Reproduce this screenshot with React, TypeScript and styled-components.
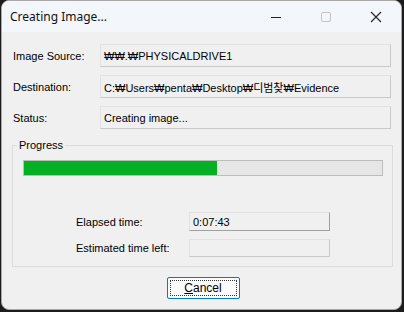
import React from "react";
import styled, { createGlobalStyle } from "styled-components";

const Global = createGlobalStyle`
  html, body { margin: 0; padding: 0; background: #1c1c1c; }
  body { width: 404px; height: 312px; overflow: hidden; }
`;

const Window = styled.div`
  box-sizing: border-box;
  margin-left: 1px;
  width: 401px;
  height: 310px;
  border: 1px solid #a8a8a8;
  border-radius: 8px;
  overflow: hidden;
  background: #f0f0f0;
  display: flex;
  flex-direction: column;
  font-family: "Liberation Sans", "Noto Sans CJK KR", sans-serif;
  font-size: 11px;
  color: #000;
`;

const TitleBar = styled.div`
  height: 31px;
  background: #f3f6fb;
  display: flex;
  align-items: center;
  padding-left: 8px;
`;

const TitleText = styled.div`
  flex: 1;
  font-family: "Noto Sans", "Open Sans", sans-serif;
  font-size: 12px;
  color: #111;
  padding-bottom: 1px;
`;

const CaptionButton = styled.div`
  width: 50px;
  height: 31px;
  display: flex;
  align-items: center;
  justify-content: center;
`;

const Body = styled.div`
  flex: 1;
  display: flex;
  flex-direction: column;
  padding: 12px 10px 0 10px;
`;

const Row = styled.div`
  display: flex;
  align-items: center;
  height: 23px;
  margin-bottom: 8px;
`;

const Label = styled.div<{ $w: number }>`
  width: ${(p) => p.$w}px;
  padding-left: 1px;
  flex-shrink: 0;
`;

const Field = styled.div<{ $w?: number; $h?: number; $strong?: boolean }>`
  box-sizing: border-box;
  width: ${(p) => (p.$w ? `${p.$w}px` : "auto")};
  flex: ${(p) => (p.$w ? "none" : 1)};
  height: ${(p) => p.$h ?? 23}px;
  border: 1px solid #e2e2e2;
  border-right-color: ${(p) => (p.$strong ? "#a0a0a0" : "#c9c9c9")};
  border-bottom-color: ${(p) => (p.$strong ? "#a0a0a0" : "#c9c9c9")};
  background: #f0f0f0;
  display: flex;
  align-items: center;
  padding-left: 3px;
  white-space: nowrap;
`;

const Group = styled.fieldset`
  margin: 2px 0 0 0;
  padding: 9px 9px 0 10px;
  height: 128px;
  box-sizing: border-box;
  border: 1px solid #dcdcdc;
  border-radius: 0;
  min-width: 0;
  width: 381px;
`;

const Legend = styled.legend`
  padding: 0 2px;
  margin-left: -6px;
  font-size: 11px;
`;

const ProgressTrack = styled.div`
  box-sizing: border-box;
  height: 16px;
  width: 360px;
  border: 1px solid #bcbcbc;
  background: #e6e6e6;
  display: flex;
`;

const ProgressFill = styled.div`
  background: #06b025;
  height: 100%;
`;

const TimeGrid = styled.div`
  display: grid;
  grid-template-columns: 113px 141px;
  row-gap: 8px;
  margin-top: 36px;
  margin-left: 53px;
  align-items: center;
`;

const TimeLabel = styled.div``;

const Footer = styled.div`
  display: flex;
  justify-content: center;
  padding-top: 10px;
  padding-left: 3px;
`;

const Button = styled.button`
  box-sizing: border-box;
  width: 73px;
  height: 22px;
  background: #fbfbfb;
  border: 1px solid #0078d7;
  border-radius: 2px;
  padding: 2px;
  font-family: "Liberation Sans", sans-serif;
  font-size: 12px;
  color: #000;
`;

const FocusRect = styled.div`
  height: 100%;
  border: 1px dotted #333;
  box-sizing: border-box;
  display: flex;
  align-items: center;
  justify-content: center;
`;

export default function App() {
  const progress = 0.54;
  return (
    <>
      <Global />
      <Window>
        <TitleBar>
          <TitleText>Creating Image...</TitleText>
          <CaptionButton>
            <svg width="12" height="12" viewBox="0 0 12 12">
              <line x1="1" y1="6.5" x2="11" y2="6.5" stroke="#222" strokeWidth="1" />
            </svg>
          </CaptionButton>
          <CaptionButton>
            <svg width="12" height="12" viewBox="0 0 12 12">
              <rect x="1.5" y="1.5" width="9" height="9" rx="1.5" fill="none" stroke="#c4c4c4" strokeWidth="1" />
            </svg>
          </CaptionButton>
          <CaptionButton>
            <svg width="12" height="12" viewBox="0 0 12 12">
              <path d="M1 1 L11 11 M11 1 L1 11" stroke="#222" strokeWidth="1.1" />
            </svg>
          </CaptionButton>
        </TitleBar>
        <Body>
          <Row>
            <Label $w={87}>Image Source:</Label>
            <Field>₩₩.₩PHYSICALDRIVE1</Field>
          </Row>
          <Row>
            <Label $w={87}>Destination:</Label>
            <Field>C:₩Users₩penta₩Desktop₩디범찾₩Evidence</Field>
          </Row>
          <Row>
            <Label $w={87}>Status:</Label>
            <Field>Creating image...</Field>
          </Row>
          <Group>
            <Legend>Progress</Legend>
            <ProgressTrack>
              <ProgressFill style={{ width: `${progress * 100}%` }} />
            </ProgressTrack>
            <TimeGrid>
              <TimeLabel>Elapsed time:</TimeLabel>
              <Field $w={141} $h={19} $strong>0:07:43</Field>
              <TimeLabel>Estimated time left:</TimeLabel>
              <Field $w={141} $h={18}></Field>
            </TimeGrid>
          </Group>
          <Footer>
            <Button>
              <FocusRect>
                <span>
                  <u>C</u>ancel
                </span>
              </FocusRect>
            </Button>
          </Footer>
        </Body>
      </Window>
    </>
  );
}
